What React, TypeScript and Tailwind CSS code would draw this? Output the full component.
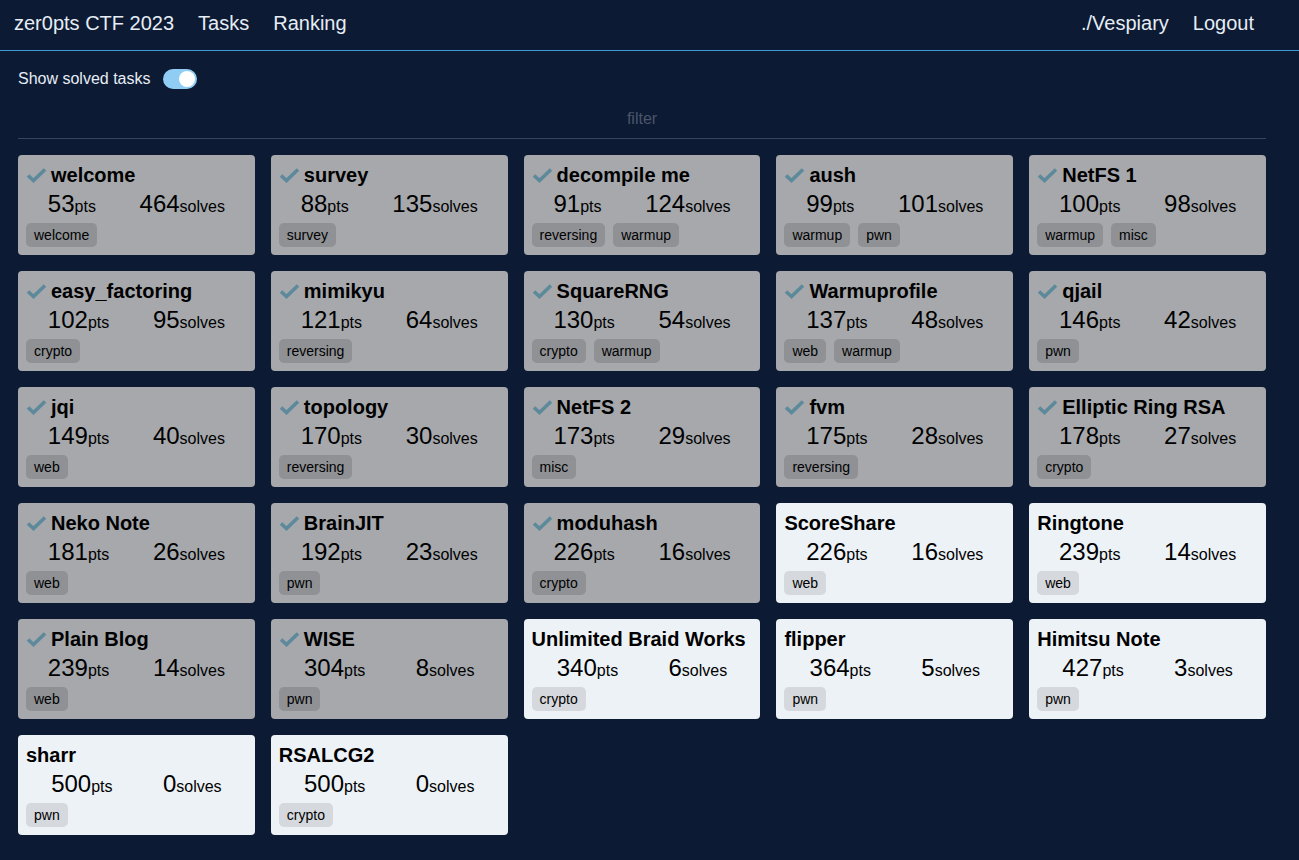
import { useState } from "react";

type Task = {
  name: string;
  pts: number;
  solves: number;
  tags: string[];
  solved: boolean;
};

const tasks: Task[] = [
  { name: "welcome", pts: 53, solves: 464, tags: ["welcome"], solved: true },
  { name: "survey", pts: 88, solves: 135, tags: ["survey"], solved: true },
  { name: "decompile me", pts: 91, solves: 124, tags: ["reversing", "warmup"], solved: true },
  { name: "aush", pts: 99, solves: 101, tags: ["warmup", "pwn"], solved: true },
  { name: "NetFS 1", pts: 100, solves: 98, tags: ["warmup", "misc"], solved: true },
  { name: "easy_factoring", pts: 102, solves: 95, tags: ["crypto"], solved: true },
  { name: "mimikyu", pts: 121, solves: 64, tags: ["reversing"], solved: true },
  { name: "SquareRNG", pts: 130, solves: 54, tags: ["crypto", "warmup"], solved: true },
  { name: "Warmuprofile", pts: 137, solves: 48, tags: ["web", "warmup"], solved: true },
  { name: "qjail", pts: 146, solves: 42, tags: ["pwn"], solved: true },
  { name: "jqi", pts: 149, solves: 40, tags: ["web"], solved: true },
  { name: "topology", pts: 170, solves: 30, tags: ["reversing"], solved: true },
  { name: "NetFS 2", pts: 173, solves: 29, tags: ["misc"], solved: true },
  { name: "fvm", pts: 175, solves: 28, tags: ["reversing"], solved: true },
  { name: "Elliptic Ring RSA", pts: 178, solves: 27, tags: ["crypto"], solved: true },
  { name: "Neko Note", pts: 181, solves: 26, tags: ["web"], solved: true },
  { name: "BrainJIT", pts: 192, solves: 23, tags: ["pwn"], solved: true },
  { name: "moduhash", pts: 226, solves: 16, tags: ["crypto"], solved: true },
  { name: "ScoreShare", pts: 226, solves: 16, tags: ["web"], solved: false },
  { name: "Ringtone", pts: 239, solves: 14, tags: ["web"], solved: false },
  { name: "Plain Blog", pts: 239, solves: 14, tags: ["web"], solved: true },
  { name: "WISE", pts: 304, solves: 8, tags: ["pwn"], solved: true },
  { name: "Unlimited Braid Works", pts: 340, solves: 6, tags: ["crypto"], solved: false },
  { name: "flipper", pts: 364, solves: 5, tags: ["pwn"], solved: false },
  { name: "Himitsu Note", pts: 427, solves: 3, tags: ["pwn"], solved: false },
  { name: "sharr", pts: 500, solves: 0, tags: ["pwn"], solved: false },
  { name: "RSALCG2", pts: 500, solves: 0, tags: ["crypto"], solved: false },
];

function Check() {
  return (
    <svg width="21" height="16" viewBox="0 0 21 16" className="shrink-0 mr-[4px]">
      <path
        d="M2 8.5 L7.5 13.5 L19 2.5"
        fill="none"
        stroke="#5d8a9b"
        strokeWidth="3.6"
        strokeLinecap="butt"
        strokeLinejoin="miter"
      />
    </svg>
  );
}

function TaskCard({ task }: { task: Task }) {
  return (
    <div
      className={`h-[100px] rounded-[4px] p-2 text-black ${
        task.solved ? "bg-[#a6a8ac]" : "bg-[#edf2f7]"
      }`}
    >
      <div className="flex items-center h-6">
        {task.solved && <Check />}
        <span className="text-[20px] leading-6 font-bold whitespace-nowrap">{task.name}</span>
      </div>
      {/* points / solves */}
      <div className="flex justify-around h-7 leading-[34px] text-[24px]">
        <span className="whitespace-nowrap">
          {task.pts}
          <span className="text-[16px]">pts</span>
        </span>
        <span className="whitespace-nowrap">
          {task.solves}
          <span className="text-[16px]">solves</span>
        </span>
      </div>
      <div className="flex gap-2 mt-2">
        {task.tags.map((t) => (
          <span
            key={t}
            className={`h-6 px-2 rounded-[5px] text-[14px] leading-6 ${
              task.solved ? "bg-[#8f9195]" : "bg-[#d5d8dc]"
            }`}
          >
            {t}
          </span>
        ))}
      </div>
    </div>
  );
}

export default function App() {
  const [showSolved, setShowSolved] = useState(true);
  const visible = tasks.filter((t) => showSolved || !t.solved);

  return (
    <div className="min-h-[860px] bg-[#0c1a33] text-[#e6edf5] font-['Liberation_Sans',Arial,sans-serif]">
      {/* Header */}
      <nav className="h-[51px] pb-1 border-b border-[#3d9ad8] flex items-center px-[14px] text-[20px]">
        <a className="mr-[24px]">zer0pts CTF 2023</a>
        <a className="mr-[24px]">Tasks</a>
        <a>Ranking</a>
        <div className="ml-auto flex items-center gap-[24px] mr-[31px]">
          <a>./Vespiary</a>
          <a>Logout</a>
        </div>
      </nav>

      <div className="px-[18px] pr-[33px]">
        {/* Toggle */}
        <div className="flex items-center h-[20px] mt-[18px]">
          <span className="text-[16px] mr-[12px]">Show solved tasks</span>
          <button
            onClick={() => setShowSolved(!showSolved)}
            className={`w-[34px] h-[20px] rounded-full flex items-center px-[2px] ${
              showSolved ? "bg-[#90cdf4] justify-end" : "bg-[#4a5568] justify-start"
            }`}
          >
            <span className="w-4 h-4 rounded-full bg-white block" />
          </button>
        </div>

        {/* Filter */}
        <input
          placeholder="filter"
          className="mt-[10px] w-full h-[40px] bg-transparent border-b border-[#36445e] text-center text-[16px] outline-none placeholder:text-[#4a5568]"
        />

        {/* Tasks */}
        <div className="grid grid-cols-5 gap-4 mt-4">
          {visible.map((t) => (
            <TaskCard key={t.name} task={t} />
          ))}
        </div>
      </div>
    </div>
  );
}
